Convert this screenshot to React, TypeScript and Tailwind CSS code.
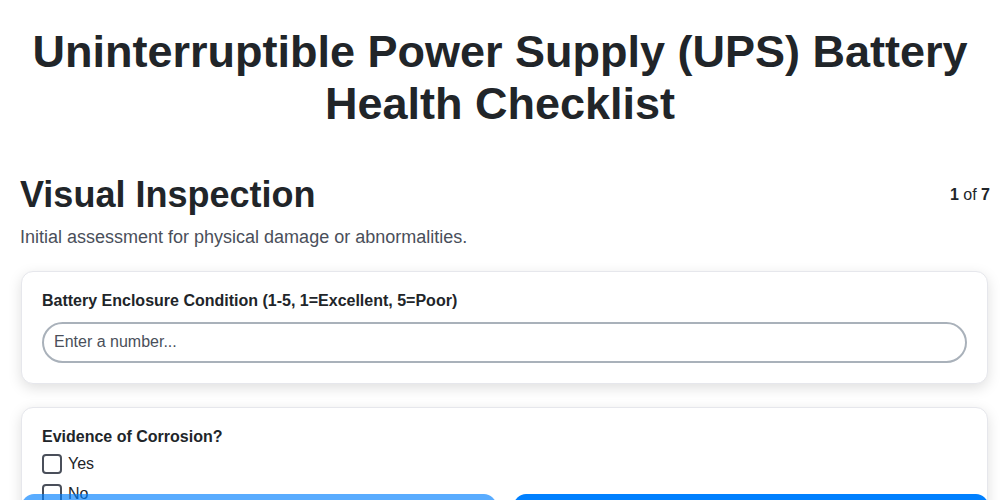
import React from "react";

export default function App() {
  return (
    <div className="min-h-screen bg-white text-[#212529]">
      <div className="pt-[26px] pb-[120px] font-['Liberation_Sans',Arial,sans-serif]">
        <h1 className="px-5 text-center text-[45px] font-bold leading-[52px] text-[#212529] mb-[43px]">
          Uninterruptible Power Supply (UPS) Battery Health Checklist
        </h1>
        <div className="pl-5 pr-[10px]">
          <div className="flex items-center justify-between">
            <h2 className="text-[36px] font-bold leading-[1.2] text-[#212529]">Visual Inspection</h2>
            <div className="text-[16px] text-[#212529]">
              <span className="font-bold">1</span> of <span className="font-bold">7</span>
            </div>
          </div>
          <p className="mt-[8px] text-[18px] leading-[1.5] text-[#4a4f5a]">
            Initial assessment for physical damage or abnormalities.
          </p>
          <div className="mt-[20px] mr-[2px] ml-px flex flex-col gap-[23px]">
            <div className="rounded-xl border border-[#e6e7ec] bg-white px-5 pt-5 pb-5 shadow-[0_4px_14px_rgba(0,0,0,0.13)]">
              <label className="block text-[16px] font-bold leading-[1.15] text-[#212529] mb-[11px]">
                Battery Enclosure Condition (1-5, 1=Excellent, 5=Poor)
              </label>
              <input
                type="text"
                placeholder="Enter a number..."
                className="block w-full h-[41px] rounded-full border-2 border-[#a9b1ba] px-[10px] text-[16px] text-[#212529] placeholder:text-[#4a4f5a] outline-none bg-white"
              />
            </div>
            <div className="rounded-xl border border-[#e6e7ec] bg-white px-5 pt-5 pb-5 shadow-[0_4px_14px_rgba(0,0,0,0.13)]">
              <label className="block text-[16px] font-bold leading-[1.15] text-[#212529] mb-[8px]">
                Evidence of Corrosion?
              </label>
              <div className="flex flex-col gap-[10px]">
                {["Yes", "No"].map((o) => (
                  <label key={o} className="flex items-center gap-[6px] text-[16px] text-[#212529] h-[20px]">
                    <span className="inline-block w-[20px] h-[20px] rounded-[4px] border-2 border-[#4a4f5a] bg-white" />
                    {o}
                  </label>
                ))}
              </div>
            </div>
          </div>
        </div>
      </div>
      <div className="fixed left-[22px] right-[12px] bottom-[-42px] flex gap-[18px] font-['Liberation_Sans',Arial,sans-serif]">
        <button className="flex-1 h-[48px] rounded-xl bg-[#0080ff] opacity-65 text-white font-bold text-[16px]">
          Previous
        </button>
        <button className="flex-1 h-[48px] rounded-xl bg-[#0080ff] text-white font-bold text-[16px]">
          Next
        </button>
      </div>
    </div>
  );
}
